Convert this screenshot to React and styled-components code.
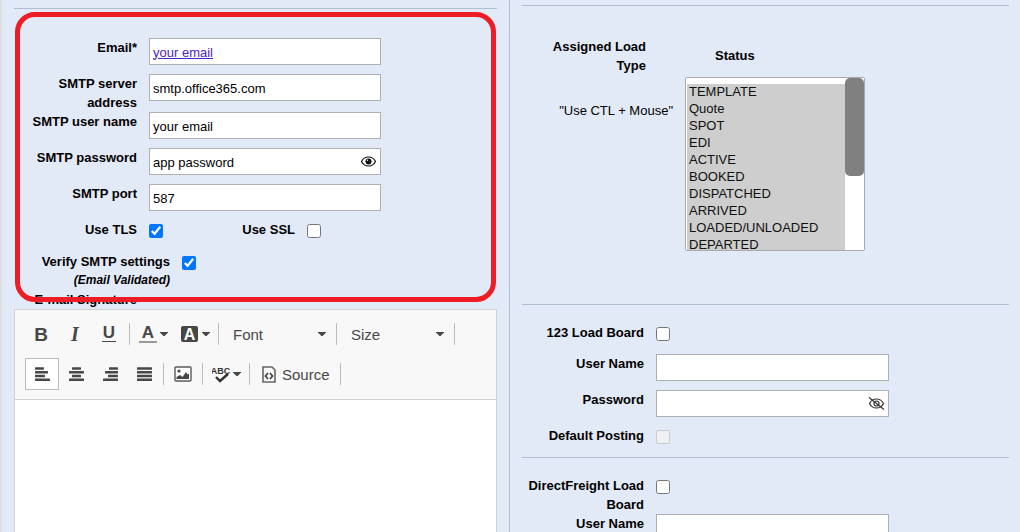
import React, { useState } from 'react'
import styled, { createGlobalStyle } from 'styled-components'

const GlobalStyle = createGlobalStyle`
    *{
        box-sizing: border-box;
    }

    body{
        margin: 0;
        background: #e3eaf7;
        color: #000;
        font-family: "Liberation Sans", Arial, sans-serif;
        font-size: 13px;
        line-height: 19px;
    }

    button, input, select{
        font-family: inherit;
        font-size: inherit;
    }
`

const Page = styled.div`
    display: grid;
    grid-template-columns: 1fr 1fr;
    height: 100vh;
    overflow: hidden;
    box-shadow: inset 2px 0 #dedee0;
`

const LeftColumn = styled.div`
    display: flex;
    flex-direction: column;
    min-width: 0;
    padding: 8px 12px 0 14px;
    border-right: 1px solid #b0bfcf;
`

const RightColumn = styled.div`
    min-width: 0;
    padding: 5px 11px 0 12px;
`

const Rule = styled.hr`
    width: 100%;
    height: 1px;
    margin: 0;
    border: none;
    background: #b0bfcf;
`

const MailSection = styled.section`
    position: relative;
    padding-top: 29px;
`

const Highlight = styled.div`
    position: absolute;
    inset: 3px 1px 7px;
    border: 5px solid #ee1c24;
    border-radius: 20px;
    pointer-events: none;
`

const BoardSection = styled.section`
    padding-top: 18px;
`

const Row = styled.div`
    display: flex;
    align-items: flex-start;
    gap: 12px;
    min-height: ${props => props.$height || 36}px;
`

const Label = styled.label`
    flex: none;
    width: ${props => props.$width || 123}px;
    font-weight: bold;
    text-align: right;
`

const Note = styled.span`
    display: block;
    font-size: 12px;
    font-style: italic;
`

const SignatureLabel = styled(Label)`
    display: block;
`

const Field = styled.div`
    position: relative;
    width: ${props => (props.$wide ? 233 : 232)}px;
`

const Input = styled.input`
    display: block;
    width: 100%;
    height: 27px;
    padding: 1px 3px 0;
    border: 1px solid #b0b0b0;
    border-radius: 0;
    background: #fff;
    color: ${props => (props.$linked ? '#4b26c8' : '#000')};
    text-decoration: ${props => (props.$linked ? 'underline' : 'none')};
`

const EyeButton = styled.button`
    position: absolute;
    top: 5px;
    right: 4px;
    display: flex;
    padding: 0;
    border: none;
    background: none;
    color: #111;
`

const CheckBox = styled.input`
    flex: none;
    width: 14px;
    height: 14px;
    margin: 4px 0 0;
`

const LoadTypes = styled.section`
    display: grid;
    grid-template-columns: 151px 180px;
    column-gap: 12px;
    padding: 31px 0 53px;
`

const LoadTypeText = styled.div`
    display: flex;
    flex-direction: column;
    gap: 26px;
    text-align: right;
`

const LoadTypeTitle = styled.div`
    width: 124px;
    padding-left: 24px;
    font-weight: bold;
`

const StatusField = styled.div`
    display: flex;
    flex-direction: column;
    gap: 12px;
    padding-top: 9px;
`

const StatusLabel = styled.label`
    padding-left: 30px;
    font-weight: bold;
`

const StatusBox = styled.div`
    position: relative;
`

const StatusList = styled.select`
    display: block;
    width: 100%;
    height: 174px;
    padding: 6px 0 0 1px;
    border: 1px solid #a9a9ae;
    border-radius: 2px;
    background: #fff;
    scrollbar-width: none;

    option{
        min-height: 17px;
        padding: 0 2px 2px;
        line-height: 15px;
    }
`

const ScrollTrack = styled.div`
    position: absolute;
    top: 1px;
    right: 1px;
    bottom: 1px;
    width: 19px;
    background: #fff;
    pointer-events: none;
`

const ScrollThumb = styled.div`
    height: 98px;
    border-radius: 5px;
    background: #808080;
`

const Editor = styled.div`
    flex: 1;
    display: flex;
    flex-direction: column;
    border: 1px solid #d1d1d1;
    border-bottom: none;
    background: #fff;
`

const Toolbar = styled.div`
    display: flex;
    flex-direction: column;
    gap: 8px;
    padding: 8px 10px 9px;
    border-bottom: 1px solid #d1d1d1;
    background: #f8f8f8;
`

const ToolRow = styled.div`
    display: flex;
    align-items: center;
    height: 32px;
`

const Tool = styled.button`
    display: flex;
    align-items: center;
    justify-content: center;
    width: 34px;
    height: 32px;
    padding: 0;
    border: 1px solid ${props => (props.$active ? '#bcbcbc' : 'transparent')};
    background: ${props => (props.$active ? '#fff' : 'none')};
    color: #474747;
`

const MenuTool = styled(Tool)`
    justify-content: flex-start;
    gap: 3px;
    width: 42px;
    padding-left: 6px;
`

const SourceTool = styled(Tool)`
    width: auto;
    gap: 6px;
    padding: 0 7px 0 9px;
    font-size: 15px;
`

const Divider = styled.span`
    width: 1px;
    height: 22px;
    margin: 0 2px;
    background: #bcbcbc;
`

const Combo = styled.div`
    position: relative;
    width: 113px;

    select{
        width: 100%;
        height: 32px;
        padding: 0 12px;
        border: none;
        appearance: none;
        background: none;
        color: #484848;
        font-size: 15px;
    }

    svg{
        position: absolute;
        top: 14px;
        right: 8px;
        pointer-events: none;
    }
`

const EditArea = styled.div`
    flex: 1;
    outline: none;
`

const statuses = [
    'TEMPLATE', 'Quote', 'SPOT', 'EDI', 'ACTIVE', 'BOOKED', 'DISPATCHED', 'ARRIVED',
    'LOADED/UNLOADED', 'DEPARTED', 'DELIVERED', 'POD', 'INVOICED', 'PAID', 'COMPLETED',
    'CANCELLED', 'CLOSED',
]

// widths of the four bars in an alignment icon
const bars = {
    left: [9, 13, 10, 15],
    center: [9, 15, 9, 15],
    right: [9, 13, 10, 15],
    justify: [15, 15, 15, 15],
}

function Caret() {
    return (
        <svg width="8" height="4" viewBox="0 0 8 4" fill="#474747"><path d="M0 0h8v.6L4.600 4H3.400L0 .6z" /></svg>
    )
}

function AlignIcon({ align }) {
    const start = width => {
        if (align === 'center') return (15 - width) / 2
        return align === 'right' ? 15 - width : 0
    }
    return (
        <svg width="15" height="14" viewBox="0 0 15 14" fill="currentColor">
            {bars[align].map((width, i) => (
                <rect key={i} x={start(width)} y={i * 3.7 + 0.3} width={width} height="2.5" rx="0.5" />
            ))}
        </svg>
    )
}

const glyphs = {
    B: { x: 8, y: 17, size: 19 },
    I: { x: 8, y: 17, size: 20, family: 'Liberation Serif', style: 'italic' },
    U: { x: 8, y: 14, size: 17 },
    A: { x: 9, y: 14, size: 17 },
    box: { x: 8.5, y: 16, size: 16 },
}

function GlyphIcon({ kind }) {
    const glyph = glyphs[kind]
    return (
        <svg width="18" height="20" viewBox="0 0 18 20" fill="currentColor" fontWeight="bold" textAnchor="middle">
            {kind === 'box' && <rect x="0" y="2" width="17" height="16" rx="2" />}
            <text
                x={glyph.x}
                y={glyph.y}
                fontSize={glyph.size}
                fontStyle={glyph.style || 'normal'}
                fontFamily={glyph.family || 'Liberation Sans'}
                fill={kind === 'box' ? '#fff' : 'currentColor'}
            >
                {kind === 'box' ? 'A' : kind}
            </text>
            {kind === 'U' && <rect x="1" y="17" width="14" height="1" />}
            {kind === 'A' && <rect x="0" y="17" width="18" height="2" fill="#999" />}
        </svg>
    )
}

function ImageIcon() {
    return (
        <svg width="18" height="16" viewBox="0 0 18 16">
            <rect x="1" y="1" width="16" height="14" rx="1" fill="#fff" stroke="#5a5a5a" strokeWidth="1.4" />
            <circle cx="5" cy="5" r="1.6" fill="#474747" />
            <path d="M2.500 13v-2l3.500-2 2.500 2 3.500-5 1.500 2.500L15 7.500V13z" fill="#474747" />
        </svg>
    )
}

function SpellIcon() {
    return (
        <svg width="18" height="20" viewBox="0 0 18 20">
            <text x="8.500" y="10" textAnchor="middle" fontSize="9" fontWeight="bold" fontFamily="Liberation Sans" fill="#333">ABC</text>
            <path d="M4 13l4 4 8-7" fill="none" stroke="#333" strokeWidth="2.4" />
        </svg>
    )
}

function SourceIcon() {
    return (
        <svg width="14" height="17" viewBox="0 0 14 17" fill="none" stroke="#666">
            <path d="M1 1h9l3 3v12H1z" strokeWidth="1.6" />
            <path d="M6 7L3.500 10L6 13M8 7l2.500 3L8 13" stroke="#474747" strokeWidth="1.8" />
        </svg>
    )
}

function EyeIcon({ hidden }) {
    if (hidden) {
        return (
            <svg width="17" height="17" viewBox="0 0 17 17" fill="none" stroke="#333" strokeWidth="1.2">
                <path d="M1.500 8.500C3 5.500 5.500 4 8.500 4s5.500 1.500 7 4.500C14 11.500 11.500 13 8.500 13S3 11.500 1.500 8.500z" />
                <circle cx="8.500" cy="8.500" r="2.500" />
                <path d="M1 2.500l15 12" />
            </svg>
        )
    }
    return (
        <svg width="17" height="17" viewBox="0 0 17 17" fill="none" stroke="currentColor" strokeWidth="1.2">
            <path d="M1.500 8.500C3 5.500 5.500 4 8.500 4s5.500 1.500 7 4.500C14 11.500 11.500 13 8.500 13S3 11.500 1.500 8.500z" />
            <circle cx="8.500" cy="8.500" r="3" fill="currentColor" stroke="none" />
            <circle cx="7.500" cy="7.300" r="0.700" fill="#fff" stroke="none" />
        </svg>
    )
}

function TextRow({ id, label, value = '', labelWidth, linked, eye }) {
    const [text, setText] = useState(value)

    return (
        <Row>
            <Label htmlFor={id} $width={labelWidth}>{label}</Label>
            <Field $wide={labelWidth}>
                <Input id={id} type="text" value={text} $linked={linked} onChange={(e) => setText(e.target.value)} />
                {eye && (
                    <EyeButton type="button" aria-label="Toggle password">
                        <EyeIcon hidden={eye === 'off'} />
                    </EyeButton>
                )}
            </Field>
        </Row>
    )
}

function SignatureEditor() {
    return (
        <Editor>
            <Toolbar>
                <ToolRow>
                    <Tool aria-label="Bold"><GlyphIcon kind="B" /></Tool>
                    <Tool aria-label="Italic"><GlyphIcon kind="I" /></Tool>
                    <Tool aria-label="Underline"><GlyphIcon kind="U" /></Tool>
                    <Divider />
                    <MenuTool aria-label="Text color"><GlyphIcon kind="A" /><Caret /></MenuTool>
                    <MenuTool aria-label="Background color"><GlyphIcon kind="box" /><Caret /></MenuTool>
                    <Divider />
                    <Combo>
                        <select aria-label="Font"><option>Font</option></select>
                        <Caret />
                    </Combo>
                    <Divider />
                    <Combo>
                        <select aria-label="Size"><option>Size</option></select>
                        <Caret />
                    </Combo>
                    <Divider />
                </ToolRow>
                <ToolRow>
                    <Tool $active aria-label="Align left"><AlignIcon align="left" /></Tool>
                    <Tool aria-label="Center"><AlignIcon align="center" /></Tool>
                    <Tool aria-label="Align right"><AlignIcon align="right" /></Tool>
                    <Tool aria-label="Justify"><AlignIcon align="justify" /></Tool>
                    <Divider />
                    <Tool aria-label="Image"><ImageIcon /></Tool>
                    <Divider />
                    <MenuTool aria-label="Spell check"><SpellIcon /><Caret /></MenuTool>
                    <Divider />
                    <SourceTool><SourceIcon />Source</SourceTool>
                    <Divider />
                </ToolRow>
            </Toolbar>
            <EditArea id="signature" role="textbox" aria-label="E-mail Signature" contentEditable suppressContentEditableWarning />
        </Editor>
    )
}

function App() {
    return (
        <>
            <GlobalStyle />
            <Page>
                <LeftColumn>
                    <Rule />
                    <MailSection>
                        <TextRow id="email" label="Email*" value="your email" linked />
                        <TextRow id="server" label="SMTP server address" value="smtp.office365.com" />
                        <TextRow id="user" label="SMTP user name" value="your email" />
                        <TextRow id="password" label="SMTP password" value="app password" eye="on" />
                        <TextRow id="port" label="SMTP port" value="587" />
                        <Row $height={32}>
                            <Label htmlFor="tls">Use TLS</Label>
                            <CheckBox id="tls" type="checkbox" defaultChecked />
                            <Label htmlFor="ssl" $width={120}>Use SSL</Label>
                            <CheckBox id="ssl" type="checkbox" />
                        </Row>
                        <Row>
                            <Label htmlFor="verify" $width={156}>
                                Verify SMTP settings
                                <Note>(Email Validated)</Note>
                            </Label>
                            <CheckBox id="verify" type="checkbox" defaultChecked />
                        </Row>
                        <SignatureLabel as="div">E-mail Signature</SignatureLabel>
                        <Highlight />
                    </MailSection>
                    <SignatureEditor />
                </LeftColumn>
                <RightColumn>
                    <Rule />
                    <LoadTypes>
                        <LoadTypeText>
                            <LoadTypeTitle>Assigned Load Type</LoadTypeTitle>
                            <span>"Use CTL + Mouse"</span>
                        </LoadTypeText>
                        <StatusField>
                            <StatusLabel htmlFor="status">Status</StatusLabel>
                            <StatusBox>
                                <StatusList id="status" multiple defaultValue={statuses}>
                                    {statuses.map(status => <option key={status} value={status}>{status}</option>)}
                                </StatusList>
                                <ScrollTrack><ScrollThumb /></ScrollTrack>
                            </StatusBox>
                        </StatusField>
                    </LoadTypes>
                    <Rule />
                    <BoardSection>
                        <Row $height={31}>
                            <Label htmlFor="board123" $width={122}>123 Load Board</Label>
                            <CheckBox id="board123" type="checkbox" />
                        </Row>
                        <TextRow id="user123" label="User Name" labelWidth={122} />
                        <TextRow id="password123" label="Password" labelWidth={122} eye="off" />
                        <Row $height={31}>
                            <Label htmlFor="posting" $width={122}>Default Posting</Label>
                            <CheckBox id="posting" type="checkbox" disabled />
                        </Row>
                    </BoardSection>
                    <Rule />
                    <BoardSection>
                        <Row $height={31}>
                            <Label htmlFor="direct" $width={122}>DirectFreight Load Board</Label>
                            <CheckBox id="direct" type="checkbox" />
                        </Row>
                        <TextRow id="userDirect" label="User Name" labelWidth={122} />
                    </BoardSection>
                </RightColumn>
            </Page>
        </>
    )
}

export default App
